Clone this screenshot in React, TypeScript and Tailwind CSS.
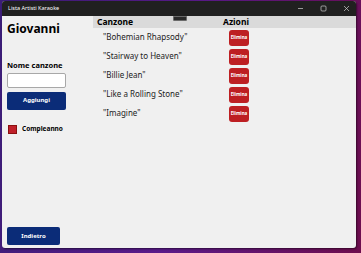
const songs = ['"Bohemian Rhapsody"', '"Stairway to Heaven"', '"Billie Jean"', '"Like a Rolling Stone"', '"Imagine"'];

export default function App() {
  return (
    <div
      className="h-[253px] w-[361px] overflow-hidden bg-[linear-gradient(100deg,#3b1d78_0%,#5a1a8a_50%,#6e0d4e_100%)] pb-[5px] pl-[2px] pr-[5px] pt-px"
      style={{ fontFamily: '"Noto Sans", "Open Sans", sans-serif' }}
    >
      <div className="flex h-full flex-col overflow-hidden rounded-[3px] bg-[#f0f0f0] shadow-[1px_1px_2px_rgba(0,0,0,0.5)]">
        {/* title bar */}
        <div className="flex h-[15px] shrink-0 items-center bg-[#202020] text-white">
          <div className="pl-[6px] text-[5.5px] leading-none">Lista Artisti Karaoke</div>
          <div className="ml-auto flex items-center gap-[16px] pr-[6px] text-[#cfcfcf]">
            <svg width="7" height="7" viewBox="0 0 7 7"><path d="M1 3.5h5" stroke="currentColor" strokeWidth="0.7" /></svg>
            <svg width="7" height="7" viewBox="0 0 7 7"><rect x="1" y="1" width="5" height="5" rx="1" fill="none" stroke="currentColor" strokeWidth="0.7" /></svg>
            <svg width="7" height="7" viewBox="0 0 7 7"><path d="M1 1l5 5M6 1l-5 5" stroke="currentColor" strokeWidth="0.7" /></svg>
          </div>
        </div>

        <div className="flex min-h-0 flex-1">
          {/* left panel */}
          <div className="flex w-[91px] shrink-0 flex-col pl-[5px]">
            <div className="mt-[7px] text-[12px] font-bold leading-none text-black">Giovanni</div>
            <div className="mt-[27px] text-[7.5px] font-bold leading-none">Nome canzone</div>
            <div className="mt-[3px] h-[15px] w-[59px] rounded-[2px] border border-[#a8a8a8] bg-white" />
            <button className="mt-[4px] flex h-[18px] w-[59px] items-center justify-center rounded-[2px] bg-[#0b2c78] text-[6px] font-bold text-white">
              Aggiungi
            </button>
            <div className="mt-[15px] flex items-center gap-[5px] pl-px">
              <div className="h-[9px] w-[9px] border border-[#8a1010] bg-[#c0202a]" />
              <span className="text-[6.5px] font-bold leading-none">Compleanno</span>
            </div>
            <button className="mt-auto mb-[3px] flex h-[18px] w-[53px] items-center justify-center rounded-[2px] bg-[#0b2c78] text-[6px] font-bold text-white">
              Indietro
            </button>
          </div>

          {/* table */}
          <div className="relative flex min-w-0 flex-1 flex-col">
            <div className="flex h-[12px] items-center bg-[#dadada] text-[8.5px] font-bold leading-none">
              <div className="w-[126px] pl-[4px]">Canzone</div>
              <div className="pl-[4px]">Azioni</div>
            </div>
            <div className="absolute left-[80px] top-0 h-[5px] w-[14px] rounded-b-[1px] border border-[#6a6a6a] bg-[#2a2a2a]" />
            {songs.map((s) => (
              <div key={s} className="flex h-[19px] items-center">
                <div className="w-[126px] pb-[2px] pl-[10px] text-[8px] leading-none text-[#222]">{s}</div>
                <button className="ml-[10px] flex h-[16px] w-[20px] items-center justify-center rounded-[3px] bg-[#bd1f22] text-[4.5px] font-bold text-white">
                  Elimina
                </button>
              </div>
            ))}
          </div>
        </div>
      </div>
    </div>
  );
}
